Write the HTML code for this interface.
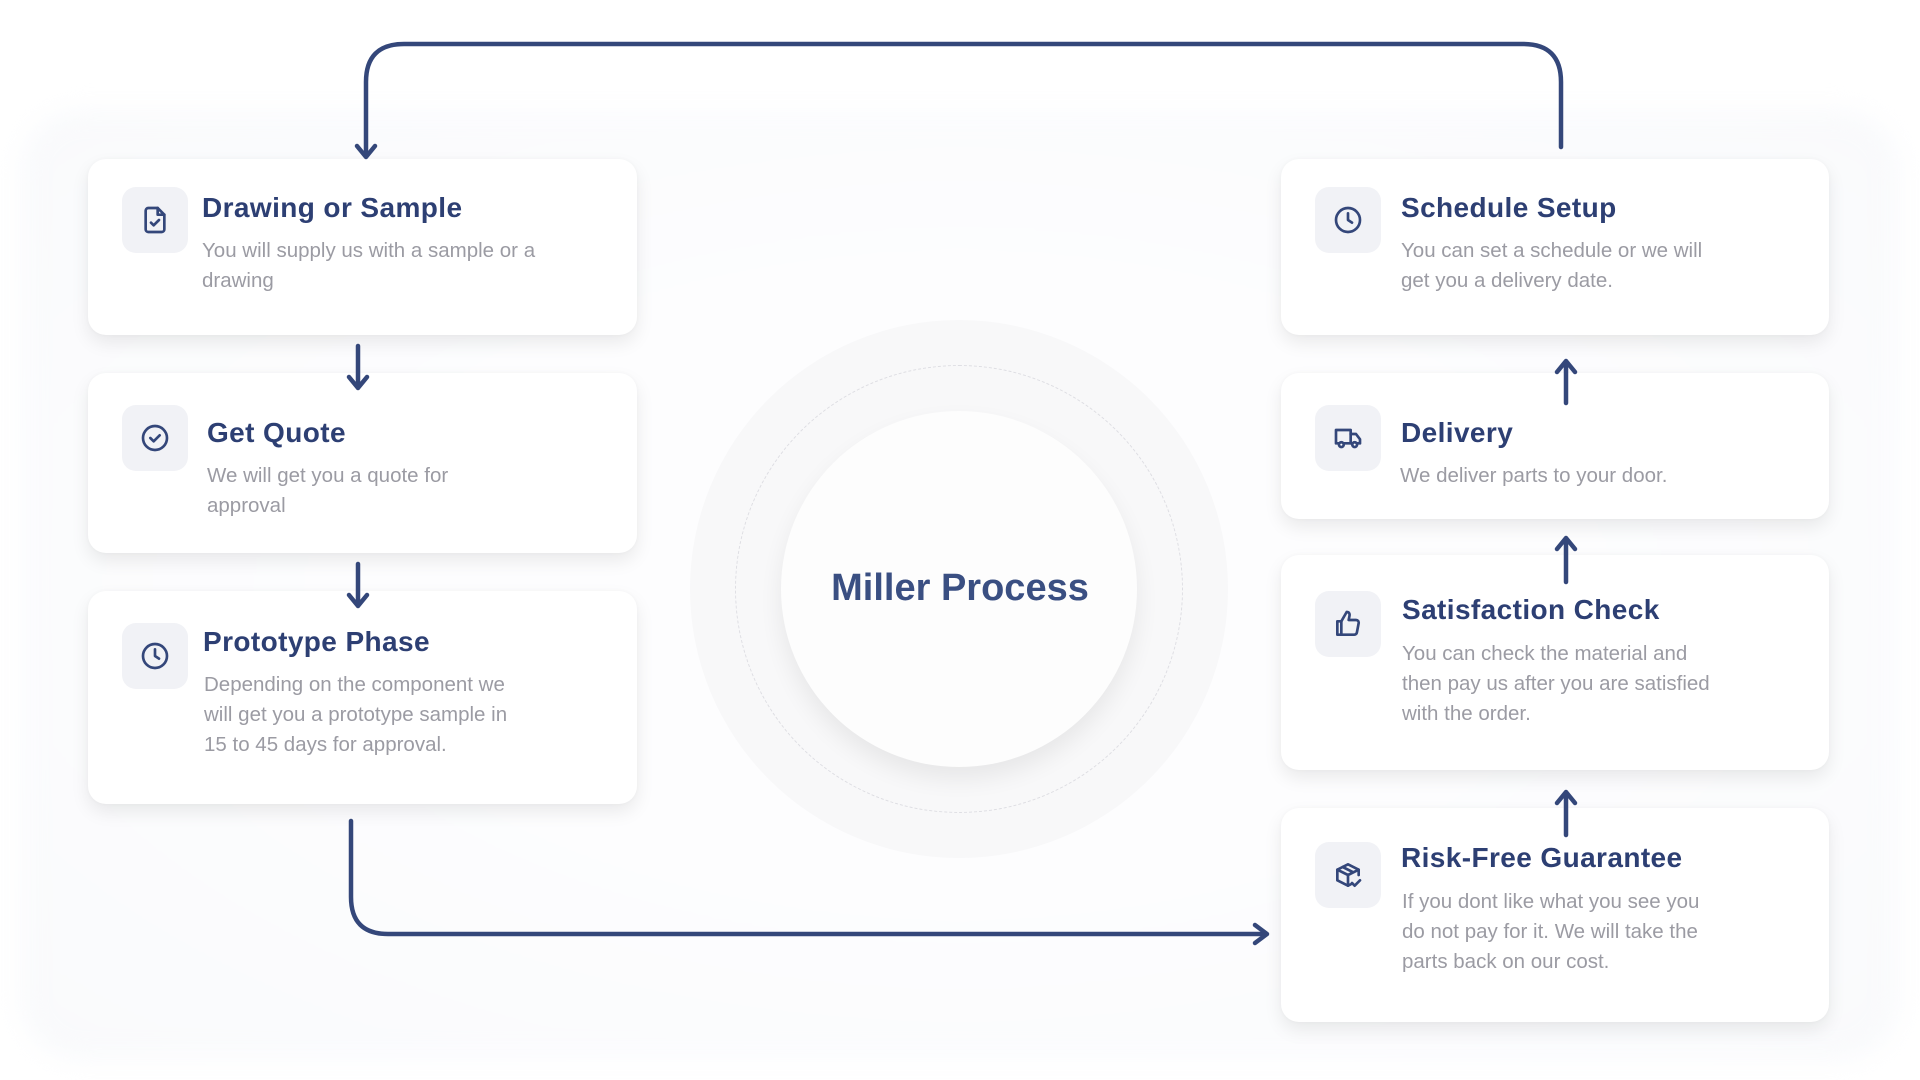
<!DOCTYPE html>
<html><head><meta charset="utf-8"><style>
*{margin:0;padding:0;box-sizing:border-box}
body{width:1920px;height:1080px;background:#fff;position:relative;overflow:hidden;font-family:"Liberation Sans",sans-serif}
.bg{position:absolute;left:20px;top:110px;width:1880px;height:950px;background:radial-gradient(ellipse at center,#fdfdfe 40%,#f9fafc 100%);border-radius:60px;filter:blur(12px)}
.card{position:absolute;background:#fff;border-radius:18px;box-shadow:0 8px 18px rgba(0,0,0,0.08),0 0 4px rgba(0,0,0,0.03)}
.ic{position:absolute;width:66px;height:66px;border-radius:14px;background:#f1f2f6;display:flex;align-items:center;justify-content:center}
.t{position:absolute;font-weight:bold;font-size:28px;color:#2d3f73;white-space:nowrap;letter-spacing:0.4px}
.d{position:absolute;font-size:20.5px;line-height:30px;color:#9b9ba3;width:345px}
svg.i{width:32px;height:32px;fill:none;stroke:#34477a;stroke-width:2;stroke-linecap:round;stroke-linejoin:round}
</style></head><body>
<div class="bg"></div>

<div style="position:absolute;left:690px;top:320px;width:538px;height:538px;border-radius:50%;background:#f8f8f9"></div>
<div style="position:absolute;left:735px;top:365px;width:448px;height:448px;border-radius:50%;border:1.5px dashed #dedee3"></div>
<div style="position:absolute;left:781px;top:411px;width:356px;height:356px;border-radius:50%;background:#fdfdfd;box-shadow:0 12px 24px rgba(0,0,0,0.07)"></div>
<div style="position:absolute;left:0;width:1920px;top:567px;text-align:center;font-weight:bold;font-size:38px;color:#3a4f82">Miller Process</div>

<div class="card" style="left:88px;top:159px;width:549px;height:176px"></div>
<div class="ic" style="left:122px;top:187px"><svg class="i" viewBox="0 0 24 24"><path d="M14 3H7a2 2 0 0 0-2 2v14a2 2 0 0 0 2 2h10a2 2 0 0 0 2-2V8z"/><path d="M14 3v5h5"/><path d="M9 14l2 2 4-4"/></svg></div>
<div class="t" style="left:202px;top:192px">Drawing or Sample</div>
<div class="d" style="left:202px;top:236px">You will supply us with a sample or a drawing</div>

<div class="card" style="left:88px;top:373px;width:549px;height:180px"></div>
<div class="ic" style="left:122px;top:405px"><svg class="i" viewBox="0 0 24 24"><circle cx="12" cy="12" r="9"/><path d="M8.5 12l2.5 2.5 4.5-4.5"/></svg></div>
<div class="t" style="left:207px;top:417px">Get Quote</div>
<div class="d" style="left:207px;top:461px;width:290px">We will get you a quote for approval</div>

<div class="card" style="left:88px;top:591px;width:549px;height:213px"></div>
<div class="ic" style="left:122px;top:623px"><svg class="i" viewBox="0 0 24 24"><circle cx="12" cy="12" r="9"/><path d="M12 7v5l3 2"/></svg></div>
<div class="t" style="left:203px;top:626px">Prototype Phase</div>
<div class="d" style="left:204px;top:670px;width:322px">Depending on the component we will get you a prototype sample in 15 to 45 days for approval.</div>

<div class="card" style="left:1281px;top:159px;width:548px;height:176px"></div>
<div class="ic" style="left:1315px;top:187px"><svg class="i" viewBox="0 0 24 24"><circle cx="12" cy="12" r="9"/><path d="M12 7v5l3 2"/></svg></div>
<div class="t" style="left:1401px;top:192px">Schedule Setup</div>
<div class="d" style="left:1401px;top:236px;width:335px">You can set a schedule or we will get you a delivery date.</div>

<div class="card" style="left:1281px;top:373px;width:548px;height:146px"></div>
<div class="ic" style="left:1315px;top:405px"><svg class="i" viewBox="0 0 24 24"><path d="M3 6h11v10H3z"/><path d="M14 9h4l3 4v3h-7"/><circle cx="7" cy="17" r="1.8" fill="#fff"/><circle cx="17" cy="17" r="1.8" fill="#fff"/></svg></div>
<div class="t" style="left:1401px;top:417px">Delivery</div>
<div class="d" style="left:1400px;top:461px">We deliver parts to your door.</div>

<div class="card" style="left:1281px;top:555px;width:548px;height:215px"></div>
<div class="ic" style="left:1315px;top:591px"><svg class="i" viewBox="0 0 24 24"><path d="M7 10v10H4V10z"/><path d="M7 10l4-7c2 0 2.5 1.5 2 3.5L12.5 9H18a2 2 0 0 1 2 2.3l-1.3 6.9A2 2 0 0 1 16.7 20H7"/></svg></div>
<div class="t" style="left:1402px;top:594px">Satisfaction Check</div>
<div class="d" style="left:1402px;top:639px;width:320px">You can check the material and then pay us after you are satisfied with the order.</div>

<div class="card" style="left:1281px;top:808px;width:548px;height:214px"></div>
<div class="ic" style="left:1315px;top:842px"><svg class="i" viewBox="0 0 24 24"><path d="M20 12V8l-8-4-8 4v8l8 4 2-1"/><path d="M4 8l8 4 8-4M12 12v8M8 6l8 4"/><path d="M15 18l2 2 4-4"/></svg></div>
<div class="t" style="left:1401px;top:842px">Risk-Free Guarantee</div>
<div class="d" style="left:1402px;top:887px;width:325px">If you dont like what you see you do not pay for it. We will take the parts back on our cost.</div>

<svg style="position:absolute;left:0;top:0" width="1920" height="1080" fill="none" stroke="#34477a" stroke-width="4.5" stroke-linecap="round" stroke-linejoin="round">
<path d="M366 156 V82 Q366 44 404 44 H1523 Q1561 44 1561 82 V147"/>
<path d="M357 146 L366 157 L375 146"/>
<path d="M351 821 V897 Q351 934 388 934 H1266"/>
<path d="M1255 925 L1267 934 L1255 943"/>
<path d="M358 346 V388 M349 377 L358 388 L367 377"/>
<path d="M358 564 V606 M349 595 L358 606 L367 595"/>
<path d="M1566 362 V403 M1557 372 L1566 361 L1575 372"/>
<path d="M1566 539 V582 M1557 549 L1566 538 L1575 549"/>
<path d="M1566 793 V835 M1557 803 L1566 792 L1575 803"/>
</svg>
</body></html>
